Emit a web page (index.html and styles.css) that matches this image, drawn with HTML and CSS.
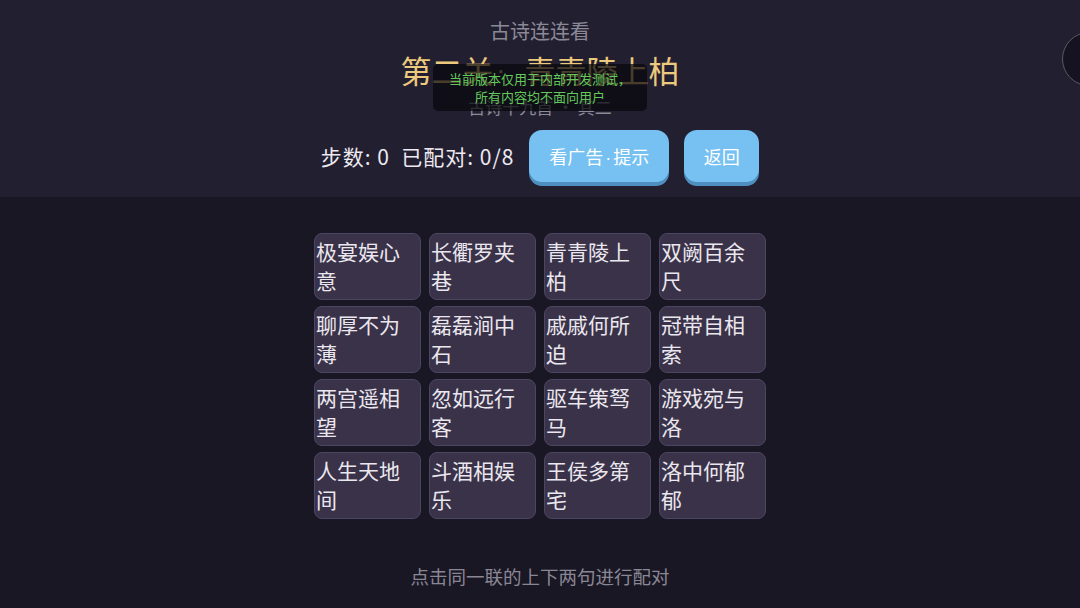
FILE: index.html
```html
<!DOCTYPE html>
<html lang="zh">
<head>
<meta charset="utf-8">
<title>古诗连连看</title>
<link rel="stylesheet" href="styles.css">
</head>
<body>
<div class="page">
  <header class="header">
    <div class="app-name">古诗连连看</div>
    <div class="title">第二关<span class="sep">·</span>青青陵上柏</div>
    <div class="subtitle">古诗十九首 · 其二</div>
    <div class="stats-row">
      <div class="stats">步数: 0&nbsp;&nbsp;已配对: 0/8</div>
      <button class="btn btn-hint">看广告<span class="dot">·</span>提示</button>
      <button class="btn btn-back">返回</button>
    </div>
  </header>
  <main class="board">
    <div class="grid">
      <div class="card">极宴娱心意</div>
      <div class="card">长衢罗夹巷</div>
      <div class="card">青青陵上柏</div>
      <div class="card">双阙百余尺</div>
      <div class="card">聊厚不为薄</div>
      <div class="card">磊磊涧中石</div>
      <div class="card">戚戚何所迫</div>
      <div class="card">冠带自相索</div>
      <div class="card">两宫遥相望</div>
      <div class="card">忽如远行客</div>
      <div class="card">驱车策驽马</div>
      <div class="card">游戏宛与洛</div>
      <div class="card">人生天地间</div>
      <div class="card">斗酒相娱乐</div>
      <div class="card">王侯多第宅</div>
      <div class="card">洛中何郁郁</div>
    </div>
    <div class="hint">点击同一联的上下两句进行配对</div>
  </main>
  <div class="toast">当前版本仅用于内部开发测试，<br>所有内容均不面向用户</div>
  <div class="float-ball"></div>
</div>
</body>
</html>
```
FILE: styles.css
```css
html, body {
  margin: 0;
  padding: 0;
  background: #1a1725;
}
.page {
  position: relative;
  width: 1080px;
  height: 608px;
  overflow: hidden;
  font-family: "Noto Sans CJK SC", "Noto Sans", sans-serif;
  background: #1a1725;
}
.header {
  height: 197px;
  box-sizing: border-box;
  background: #221f31;
  display: flex;
  flex-direction: column;
  align-items: center;
  padding-top: 19px;
}
.app-name {
  font-size: 20px;
  line-height: 24px;
  color: #8c8996;
}
.title {
  margin-top: 7px;
  font-size: 31px;
  line-height: 40px;
  color: #ecc97c;
  display: flex;
  align-items: center;
}
.sep {
  display: inline-block;
  width: 31px;
  padding-left: 3px;
  box-sizing: border-box;
  font-family: "Liberation Sans", sans-serif;
  font-size: 26px;
}
.subtitle {
  margin-top: 5px;
  font-size: 17px;
  line-height: 24px;
  color: #8c8996;
}
.stats-row {
  margin-top: 11px;
  display: flex;
  align-items: flex-start;
  gap: 15px;
}
.stats {
  font-size: 21px;
  letter-spacing: 1px;
  line-height: 52px;
  color: #eeeaf0;
}
.btn {
  height: 52px;
  border: none;
  border-radius: 13px;
  background: #76c1f1;
  box-shadow: 0 4px 0 #4f8fbf;
  color: #ffffff;
  font-family: "Noto Sans CJK SC", "Noto Sans", sans-serif;
  font-size: 18px;
  padding: 0;
}
.dot {
  font-family: "Liberation Sans", sans-serif;
  padding: 0 2px;
}
.btn-hint { width: 140px; }
.btn-back { width: 75px; }
.board {
  display: flex;
  flex-direction: column;
  align-items: center;
  padding-top: 36px;
}
.grid {
  display: grid;
  grid-template-columns: repeat(4, 107px);
  grid-auto-rows: 67px;
  column-gap: 8px;
  row-gap: 6px;
}
.card {
  box-sizing: border-box;
  background: #393249;
  border: 1px solid #4d4663;
  border-radius: 8px;
  color: #ebe7ee;
  font-size: 21px;
  line-height: 29px;
  padding: 3px 0 0 1px;
}
.hint {
  margin-top: 45px;
  font-size: 18.5px;
  line-height: 24px;
  color: #8a8794;
}
.toast {
  position: absolute;
  left: 433px;
  top: 64px;
  width: 214px;
  height: 47px;
  box-sizing: border-box;
  padding-top: 6px;
  background: rgba(8, 8, 12, 0.72);
  border-radius: 5px;
  color: #64c85c;
  font-size: 13px;
  line-height: 18px;
  text-align: center;
}
.float-ball {
  position: absolute;
  left: 1062px;
  top: 32px;
  width: 54px;
  height: 54px;
  box-sizing: border-box;
  border-radius: 50%;
  background: #15131f;
  border: 1.5px solid #5a5766;
}
```
